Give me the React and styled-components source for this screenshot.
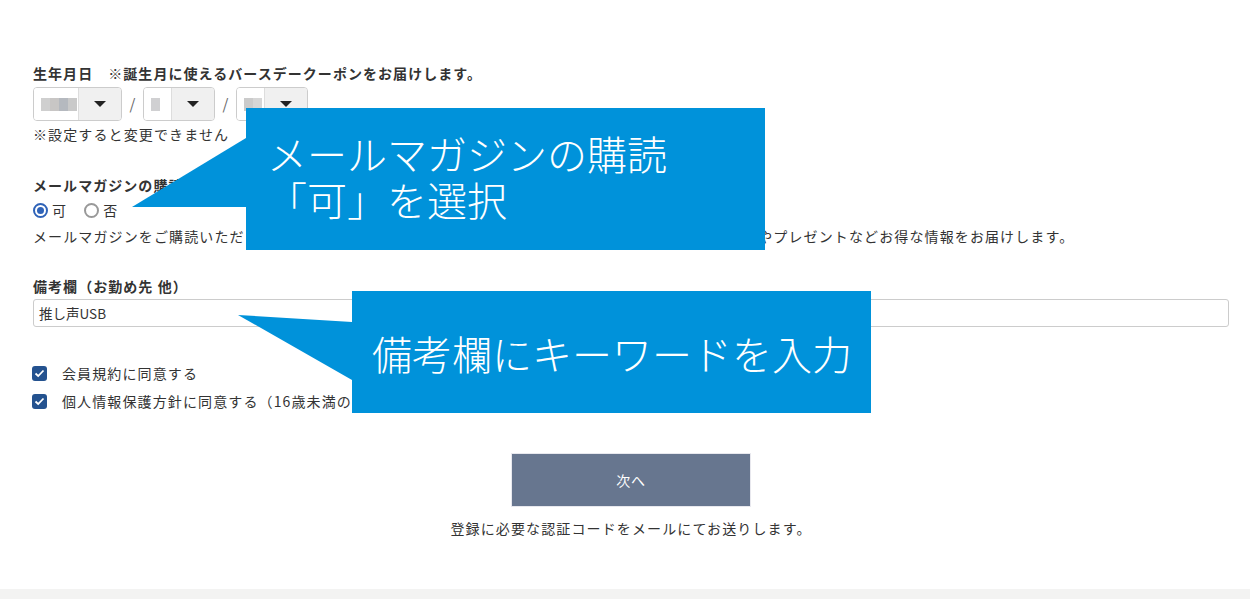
import React from "react";
import styled, { createGlobalStyle } from "styled-components";

const GlobalStyle = createGlobalStyle`
  body {
    margin: 0;
    background: #fff;
    font-family: "Noto Sans CJK JP", "Noto Sans", sans-serif;
    color: #333;
  }
`

const Page = styled.div`
  width: 1250px;
  height: 599px;
  display: flex;
  flex-direction: column;
  overflow: hidden;
`

const Form = styled.div`
  position: relative;
  flex: 1 0 0;
  padding: 63px 21px 0 33px;
  display: flex;
  flex-direction: column;
  font-size: 14px;
  letter-spacing: 0.08em;
  line-height: 20px;
`

const Label = styled.div`
  font-weight: bold;
  font-size: 14px;
  letter-spacing: 0.075em;
  margin-top: ${({ gap }) => gap || 0}px;
`

const Text = styled.div`
  margin-top: ${({ gap }) => gap || 0}px;
  white-space: nowrap;
`

const SelectRow = styled.div`
  display: flex;
  align-items: center;
  margin-top: 4px;
`

const Select = styled.div`
  display: flex;
  height: 32px;
  border: 1px solid #ccc;
  border-radius: 4px;
  overflow: hidden;
`

const SelectValue = styled.div`
  width: ${({ w }) => w}px;
  display: flex;
  align-items: center;
  padding-left: 7px;
  box-sizing: border-box;
  background: #fff;
`

const SelectArrow = styled.div`
  width: 42px;
  background: #f0f0f0;
  border-left: 1px solid #ddd;
  display: flex;
  align-items: center;
  justify-content: center;

  &::after {
    content: "";
    border-left: 6px solid transparent;
    border-right: 6px solid transparent;
    border-top: 6px solid #222;
  }
`

const Blur = styled.div`
  display: flex;
  height: 13px;
`

const Pix = styled.span`
  width: 9px;
  height: 13px;
  background: ${({ c }) => c};
`

const Slash = styled.span`
  width: 21px;
  text-align: center;
  color: #666;
  font-size: 15px;
  letter-spacing: 0;
`

const RadioRow = styled.div`
  display: flex;
  align-items: center;
  margin-top: 5px;
`

const Radio = styled.span`
  width: 15px;
  height: 15px;
  box-sizing: border-box;
  border-radius: 50%;
  border: 2px solid ${({ on }) => (on ? "#2f63b8" : "#999")};
  display: flex;
  align-items: center;
  justify-content: center;
  margin-right: 4px;

  &::after {
    content: "";
    width: 7px;
    height: 7px;
    border-radius: 50%;
    background: ${({ on }) => (on ? "#2f63b8" : "transparent")};
  }
`

const RadioLabel = styled.span`
  margin-right: 17px;
`

const Input = styled.div`
  margin-top: 3px;
  height: 28px;
  border: 1px solid #ccc;
  border-radius: 3px;
  box-sizing: border-box;
  padding-left: 5px;
  display: flex;
  align-items: center;
  font-size: 13.5px;
  letter-spacing: 0;
`

const CheckRow = styled.div`
  display: flex;
  align-items: center;
  margin-top: ${({ gap }) => gap}px;
  white-space: nowrap;
`

const Check = styled.span`
  width: 15px;
  height: 15px;
  border-radius: 3px;
  background: #24528f;
  display: flex;
  align-items: center;
  justify-content: center;
  margin-left: -1px;
  margin-right: 15px;
`

const ButtonArea = styled.div`
  display: flex;
  flex-direction: column;
  align-items: center;
  margin-top: 42px;
`

const NextButton = styled.button`
  width: 240px;
  height: 54px;
  border: 1px solid #e8e8ee;
  background: #67768f;
  color: #fff;
  font-family: inherit;
  font-size: 14px;
  letter-spacing: 0.05em;
`

const Note = styled.div`
  margin-top: 11px;
`

const Footer = styled.div`
  height: 10px;
  background: #f3f3f2;
`

const Callout = styled.div`
  position: absolute;
  left: ${({ x }) => x}px;
  top: ${({ y }) => y}px;
  width: 519px;
  height: ${({ h }) => h}px;
  background: #0092da;
  color: #fff;
  font-size: 40px;
  font-weight: 300;
  line-height: 46px;
  letter-spacing: 0;
  box-sizing: border-box;
  padding: ${({ pad }) => pad};
  white-space: pre;
`

const Pointer = styled.svg`
  position: absolute;
  left: -114px;
  top: 0;
  overflow: visible;
`

const blur1 = ["#cfcfcf", "#c8c6c5", "#b5b9bf", "#c9c9c9"]

const CheckMark = () => (
  <svg width="11" height="9" viewBox="0 0 11 9">
    <path d="M1.5 4.5 L4.2 7 L9.5 1.5" fill="none" stroke="#fff" strokeWidth="1.8" />
  </svg>
)

const App = () => (
  <Page>
    <GlobalStyle />
    <Form>
      <Label>生年月日　※誕生月に使えるバースデークーポンをお届けします。</Label>
      <SelectRow>
        <Select>
          <SelectValue w={44}>
            <Blur>{blur1.map((c, i) => <Pix key={i} c={c} />)}</Blur>
          </SelectValue>
          <SelectArrow />
        </Select>
        <Slash>/</Slash>
        <Select>
          <SelectValue w={27}>
            <Blur><Pix c="#d0d0d2" /></Blur>
          </SelectValue>
          <SelectArrow />
        </Select>
        <Slash>/</Slash>
        <Select>
          <SelectValue w={27}>
            <Blur><Pix c="#cbcbcb" /><Pix c="#d6d6d6" /></Blur>
          </SelectValue>
          <SelectArrow />
        </Select>
      </SelectRow>
      <Text gap={3}>※設定すると変更できません</Text>

      <Label gap={31}>メールマガジンの購読</Label>
      <RadioRow>
        <Radio on />
        <RadioLabel>可</RadioLabel>
        <Radio />
        <RadioLabel>否</RadioLabel>
      </RadioRow>
      <Text gap={6}>
        メールマガジンをご購読いただくと、新商品・新サービスのご案内や会員様限定のシークレットセール情報やプレゼントなどお得な情報をお届けします。
      </Text>

      <Label gap={30}>備考欄（お勤め先 他）</Label>
      <Input>推し声USB</Input>

      <CheckRow gap={36}>
        <Check><CheckMark /></Check>
        会員規約に同意する
      </CheckRow>
      <CheckRow gap={8}>
        <Check><CheckMark /></Check>
        個人情報保護方針に同意する（16歳未満の場合は保護者の同意が必要です）
      </CheckRow>

      <ButtonArea>
        <NextButton>次へ</NextButton>
        <Note>登録に必要な認証コードをメールにてお送りします。</Note>
      </ButtonArea>

      <Callout x={246} y={108} h={142} pad="22px 0 0 21px">
        <Pointer width="114" height="120">
          <polygon points="114,30 114,99 0,99" fill="#0092da" />
        </Pointer>
        {"メールマガジンの購読\n「可」を選択"}
      </Callout>

      <Callout x={352} y={291} h={122} pad="39px 0 0 20px">
        <Pointer width="114" height="100">
          <polygon points="114,31 114,89 0,24" fill="#0092da" />
        </Pointer>
        備考欄にキーワードを入力
      </Callout>
    </Form>
    <Footer />
  </Page>
)

export default App
